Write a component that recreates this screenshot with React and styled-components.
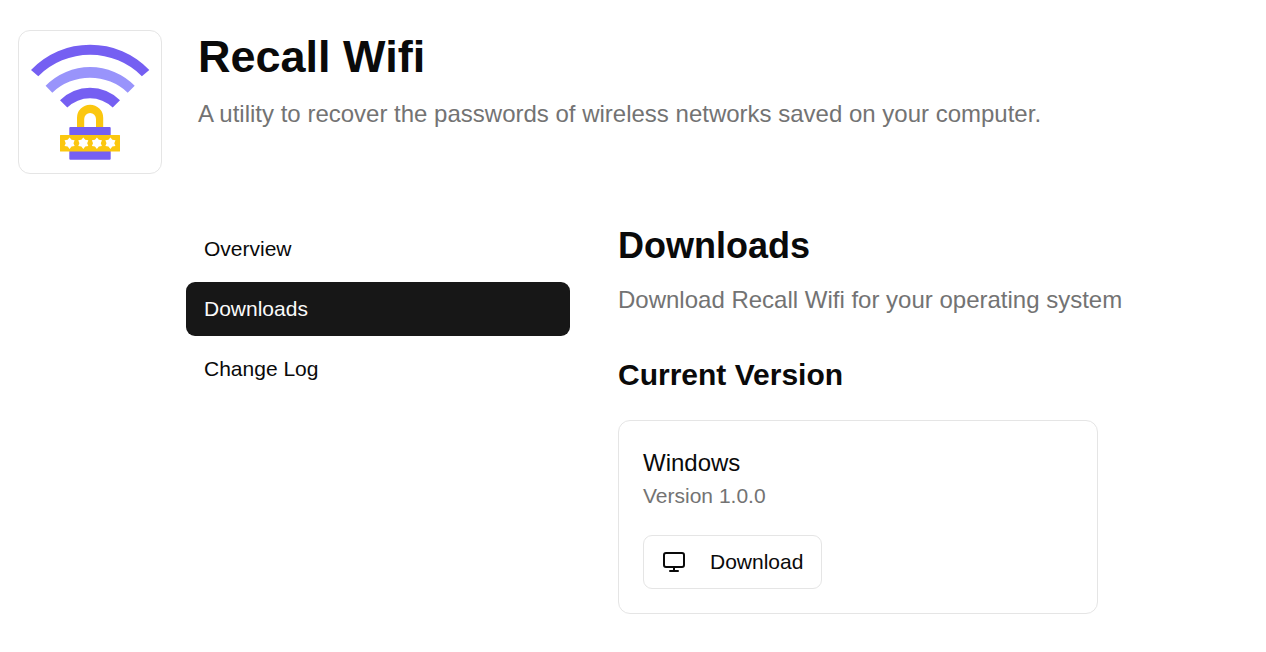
import React from "react";
import styled, { createGlobalStyle } from "styled-components";
import { Monitor } from "lucide-react";

const GlobalStyle = createGlobalStyle`
  *, *::before, *::after { box-sizing: border-box; }
  body {
    margin: 0;
    background: #ffffff;
    color: #0a0a0a;
    font-family: "Liberation Sans", Arial, Helvetica, sans-serif;
  }
  h1, h2, h3, p { margin: 0; }
`;

const Page = styled.div`
  display: flex;
  flex-direction: column;
  gap: 48px;
  padding: 30px 18px;
`;

const Header = styled.header`
  display: flex;
  align-items: flex-start;
  gap: 36px;
`;

const LogoFrame = styled.div`
  flex: none;
  width: 144px;
  height: 144px;
  border: 1px solid #e5e5e5;
  border-radius: 12px;

  svg { display: block; width: 100%; height: 100%; }
`;

const Intro = styled.div`
  display: flex;
  flex-direction: column;
  gap: 12px;
  min-width: 0;
`;

const Title = styled.h1`
  font-size: 45px;
  line-height: 54px;
  font-weight: 700;
`;

const Lead = styled.p`
  font-size: 24px;
  line-height: 36px;
  color: #737373;
`;

const Body = styled.div`
  display: flex;
  align-items: flex-start;
  gap: 48px;
  padding-left: 168px;
`;

const Nav = styled.nav`
  display: flex;
  flex: none;
  flex-direction: column;
  gap: 6px;
  width: 384px;
`;

const NavLink = styled.a`
  padding: 12px 18px;
  border-radius: 9px;
  font-size: 21px;
  line-height: 30px;
  text-decoration: none;
  color: ${(p) => (p.$active ? "#fafafa" : "#0a0a0a")};
  background: ${(p) => (p.$active ? "#171717" : "transparent")};
`;

const Main = styled.main`
  display: flex;
  flex: 1;
  flex-direction: column;
  gap: 36px;
  min-width: 0;
`;

const Section = styled.section`
  display: flex;
  flex-direction: column;
  gap: ${(p) => p.$gap}px;
`;

const Heading = styled.h2`
  font-size: 36px;
  line-height: 48px;
  font-weight: 700;
`;

const Subheading = styled.h3`
  font-size: 30px;
  line-height: 42px;
  font-weight: 700;
`;

const Card = styled.article`
  display: flex;
  flex-direction: column;
  align-items: flex-start;
  gap: 24px;
  max-width: 480px;
  padding: 24px;
  border: 1px solid #e5e5e5;
  border-radius: 12px;
`;

const Platform = styled.p`
  font-size: 24px;
  line-height: 36px;
`;

const Version = styled.p`
  font-size: 21px;
  line-height: 30px;
  color: #737373;
`;

const DownloadButton = styled.button`
  display: inline-flex;
  align-items: center;
  gap: 24px;
  height: 54px;
  padding: 0 18px;
  border: 1px solid #e5e5e5;
  border-radius: 9px;
  background: #ffffff;
  color: #0a0a0a;
  font: inherit;
  font-size: 21px;
  line-height: 30px;
  cursor: pointer;
`;

const starPoints = Array.from({ length: 12 }, (_, i) => {
  const r = i % 2 ? 3.9 : 5.8;
  const a = (i * Math.PI) / 6;
  return `${(r * Math.sin(a)).toFixed(2)},${(-r * Math.cos(a)).toFixed(2)}`;
}).join(" ");

function Logo() {
  return (
    <svg viewBox="0 0 142 142" role="img" aria-label="Recall Wifi logo">
      <path fill="#755ff2" d="M12 39A81.7 81.7 0 0 1 130.3 39L122.9 45.2A73.4 73.4 0 0 0 19.3 45.2Z" />
      <path fill="#9994fb" d="M26.6 54.7A62.5 62.5 0 0 1 115.7 54.7L108.7 61.7A54.9 54.9 0 0 0 33.3 61.7Z" />
      <path fill="#755ff2" d="M41 69.3A42.3 42.3 0 0 1 101 69.3L93.7 76.5A32.6 32.6 0 0 0 48.3 76.5Z" />
      <path fill="#fbc70f" d="M58 97V86.8A13.1 13.1 0 0 1 84.2 86.8V97H77V88A5.9 5.9 0 0 0 65.2 88V97Z" />
      <rect x="50.3" y="96" width="41.4" height="32.7" rx="1" fill="#755ff2" />
      <rect x="41" y="104" width="60" height="16.4" rx="0.5" fill="#fbc70f" />
      {[50.6, 64.3, 77.9, 91.4].map((x) => (
        <polygon key={x} points={starPoints} fill="#ffffff" transform={`translate(${x} 112.2)`} />
      ))}
    </svg>
  );
}

const links = [
  { label: "Overview", href: "#overview" },
  { label: "Downloads", href: "#downloads", active: true },
  { label: "Change Log", href: "#change-log" },
];

export default function App() {
  return (
    <>
      <GlobalStyle />
      <Page>
        <Header>
          <LogoFrame>
            <Logo />
          </LogoFrame>
          <Intro>
            <Title>Recall Wifi</Title>
            <Lead>A utility to recover the passwords of wireless networks saved on your computer.</Lead>
          </Intro>
        </Header>
        <Body>
          <Nav aria-label="Sections">
            {links.map((l) => (
              <NavLink key={l.label} href={l.href} $active={l.active} aria-current={l.active ? "page" : undefined}>
                {l.label}
              </NavLink>
            ))}
          </Nav>
          <Main>
            <Section $gap={12}>
              <Heading>Downloads</Heading>
              <Lead>Download Recall Wifi for your operating system</Lead>
            </Section>
            <Section $gap={24}>
              <Subheading>Current Version</Subheading>
              <Card>
                <div>
                  <Platform>Windows</Platform>
                  <Version>Version 1.0.0</Version>
                </div>
                <DownloadButton type="button">
                  <Monitor size={24} aria-hidden="true" />
                  Download
                </DownloadButton>
              </Card>
            </Section>
          </Main>
        </Body>
      </Page>
    </>
  );
}
